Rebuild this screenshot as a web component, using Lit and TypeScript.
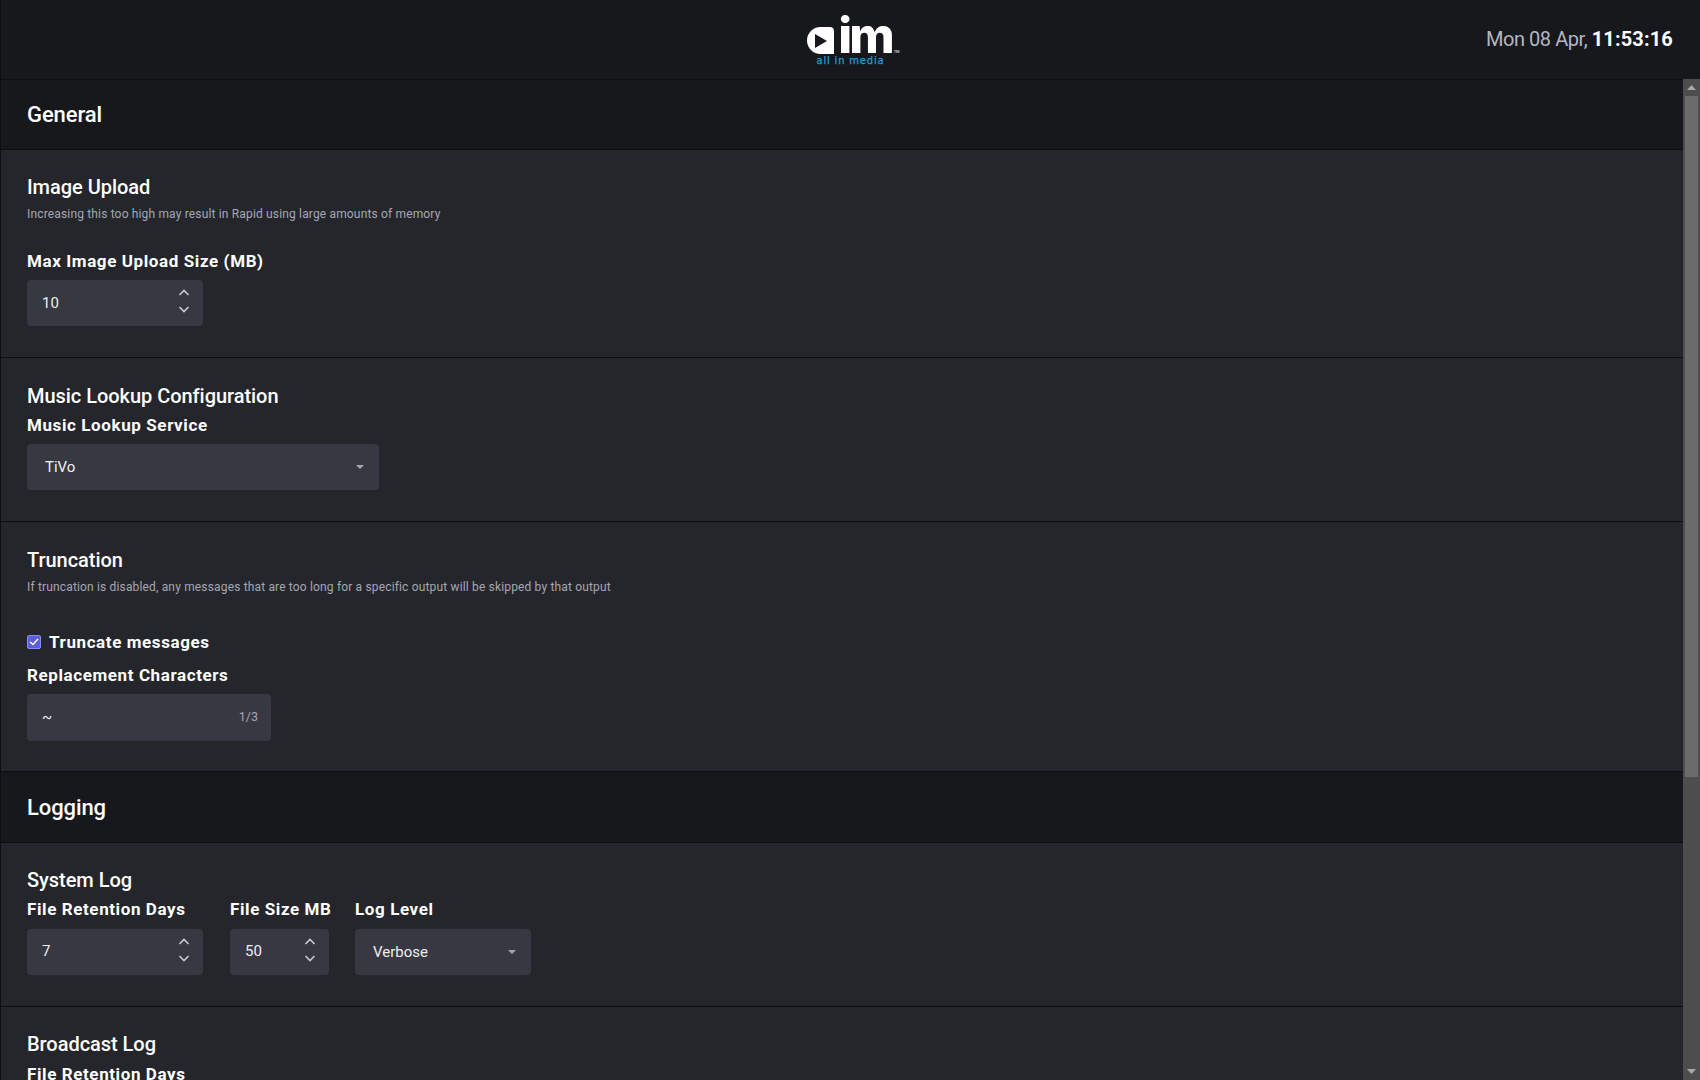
import { LitElement, html, css, svg } from 'lit';
import { customElement } from 'lit/decorators.js';

const chevrons = html`
  <svg class="spin" width="14" height="26" viewBox="0 0 14 26" fill="none" stroke="#c9cad0" stroke-width="1.6">
    <path d="M2.5 7 L7 2.5 L11.5 7" />
    <path d="M2.5 19 L7 23.5 L11.5 19" />
  </svg>
`;

const caret = svg`<path d="M0 0 H8 L4 4 Z" fill="#a6a7af" />`;

@customElement('app-root')
export class AppRoot extends LitElement {
  static styles = css`
    :host {
      display: flex;
      flex-direction: column;
      width: 1700px;
      height: 1080px;
      overflow: hidden;
      background: #25262b;
      color: #fff;
      font-family: Roboto, 'Liberation Sans', sans-serif;
    }
    .top {
      flex: none;
      height: 80px;
      box-sizing: border-box;
      display: grid;
      grid-template-columns: 1fr auto 1fr;
      align-items: center;
      background: #17181c;
      border-bottom: 1px solid #0d0e10;
      border-left: 1px solid #0d0e10;
    }
    .logo {
      grid-column: 2;
      display: flex;
      flex-direction: column;
      align-items: center;
      padding-top: 2px;
    }
    .logoMark {
      display: flex;
      align-items: flex-end;
      height: 42px;
    }
    .logoA {
      display: block;
      margin-right: 4px;
      margin-bottom: 3px;
    }
    .logoIm {
      font-family: Inter, Roboto, sans-serif;
      font-weight: 800;
      font-size: 49px;
      line-height: 42px;
      letter-spacing: -3px;
    }
    .tm {
      width: 6px;
      margin-right: -6px;
      font-size: 4px;
      line-height: 6px;
      margin-left: 2px;
      margin-bottom: 2px;
    }
    .logoSub {
      font-family: 'DejaVu Sans', sans-serif;
      font-size: 10px;
      line-height: 10px;
      letter-spacing: 0.8px;
      color: #1c9fd8;
      -webkit-text-stroke: 0.25px #1c9fd8;
      margin-top: -1px;
    }
    .clock {
      grid-column: 3;
      justify-self: end;
      margin-right: 27px;
      margin-bottom: 2px;
      font-size: 20px;
      color: #b4b6c2;
      letter-spacing: -0.45px;
    }
    .clock b {
      color: #fff;
      font-weight: 700;
      letter-spacing: 0.15px;
    }
    .body {
      flex: 1;
      min-height: 0;
      display: flex;
    }
    .scroller {
      flex: 1;
      min-width: 0;
      overflow: hidden;
      border-left: 1px solid #0d0e10;
    }
    .bar {
      flex: none;
      width: 17px;
      margin-top: -1px;
      display: flex;
      flex-direction: column;
      align-items: center;
      background: #4d4d4d;
    }
    .barBtn {
      flex: none;
      height: 17px;
      display: flex;
      align-items: center;
      justify-content: center;
    }
    .thumb {
      flex: none;
      width: 13px;
      height: 681px;
      background: #6b6b6b;
    }
    .track {
      flex: 1;
    }
    .band {
      height: 70px;
      box-sizing: border-box;
      display: flex;
      align-items: center;
      padding-left: 26px;
      background: #17181c;
      border-bottom: 1px solid #0d0e10;
      font-size: 22px;
      font-weight: 500;
      letter-spacing: -0.1px;
    }
    .band.tall {
      height: 71px;
    }
    .panel {
      box-sizing: border-box;
      padding: 24px 26px 30px;
      border-bottom: 1px solid #0d0e10;
    }
    .panel.tight {
      padding-top: 23px;
    }
    .panel.last {
      border-bottom: 0;
    }
    h3 {
      margin: 0 0 3px;
      font-size: 20px;
      line-height: 28px;
      font-weight: 500;
      letter-spacing: -0.04px;
    }
    .hint {
      margin: 4px 0 0;
      font-size: 12px;
      line-height: 18px;
      letter-spacing: 0.16px;
      color: #a6a7b4;
    }
    h3:has(+ .hint) {
      margin-bottom: 0;
    }
    label {
      display: block;
      font-size: 17px;
      line-height: 24px;
      font-weight: 700;
      letter-spacing: 0.6px;
      white-space: nowrap;
    }
    .field {
      height: 46px;
      margin-top: 7px;
      box-sizing: border-box;
      display: flex;
      align-items: center;
      justify-content: space-between;
      background: #373842;
      border-radius: 4px;
      font-size: 15px;
      color: #eeeef0;
    }
    .num {
      padding: 0 12px 0 15px;
    }
    .num > span:first-child {
      margin-bottom: 1px;
    }
    .num .spin {
      margin-bottom: 4px;
    }
    .sel {
      padding: 0 15px 0 18px;
    }
    .logRow {
      display: grid;
      grid-template-columns: 177px 99px 176px;
      column-gap: 26px;
    }
    .logRow .field {
      margin-top: 8px;
    }
    .logRow .num > span:first-child {
      margin-bottom: 2px;
    }
    .check {
      display: flex;
      align-items: center;
      gap: 8px;
    }
    .box {
      width: 14px;
      height: 14px;
      box-sizing: border-box;
      border: 1px solid #8a8cf0;
      border-radius: 2px;
      background: #5d5fd6;
      display: flex;
      align-items: center;
      justify-content: center;
    }
    .count {
      font-size: 12.5px;
      color: #a6a7b4;
      margin-bottom: 2px;
    }
    .wCount {
      height: 47px;
      padding-right: 13px;
    }
  `;

  private logoA() {
    return html`<svg class="logoA" width="27" height="27" viewBox="0 0 27 27">
      <path
        fill="#fff"
        fill-rule="evenodd"
        d="M13.5 0 H23 C25.5 0 27 1.5 27 4 V27 H13.5 C6 27 0 21 0 13.5 C0 6 6 0 13.5 0 Z M8 7 V21 L20 14 Z"
      />
    </svg>`;
  }

  private numField(value: string, width: string) {
    return html`<div class="field num" style="width:${width}"><span>${value}</span>${chevrons}</div>`;
  }

  private selectField(value: string, width: string) {
    return html`<div class="field sel" style="width:${width}">
      <span>${value}</span>
      <svg width="8" height="4" viewBox="0 0 8 4">${caret}</svg>
    </div>`;
  }

  render() {
    return html`
      <header class="top">
        <div class="logo">
          <div class="logoMark">
            ${this.logoA()}<span class="logoIm">im</span><span class="tm">TM</span>
          </div>
          <div class="logoSub">all in media</div>
        </div>
        <div class="clock">Mon 08 Apr, <b>11:53:16</b></div>
      </header>
      <div class="body">
        <main class="scroller">
          <div class="band">General</div>
          <section class="panel tight" style="height:208px">
            <h3>Image Upload</h3>
            <p class="hint">Increasing this too high may result in Rapid using large amounts of memory</p>
            <label style="margin-top:26px">Max Image Upload Size (MB)</label>
            ${this.numField('10', '176px')}
          </section>
          <section class="panel" style="height:164px">
            <h3>Music Lookup Configuration</h3>
            <label>Music Lookup Service</label>
            ${this.selectField('TiVo', '352px')}
          </section>
          <section class="panel" style="height:250px">
            <h3>Truncation</h3>
            <p class="hint">If truncation is disabled, any messages that are too long for a specific output will be skipped by that output</p>
            <div class="check" style="margin-top:34px">
              <div class="box">
                <svg width="10" height="8" viewBox="0 0 10 8" fill="none" stroke="#fff" stroke-width="1.4"><path d="M1 4 L4 6.5 L9 1" /></svg>
              </div>
              <label>Truncate messages</label>
            </div>
            <label style="margin-top:9px">Replacement Characters</label>
            <div class="field num wCount" style="width:244px">
              <span>~</span><span class="count">1/3</span>
            </div>
          </section>
          <div class="band tall">Logging</div>
          <section class="panel tight" style="height:164px">
            <h3>System Log</h3>
            <div class="logRow">
              <div>
                <label>File Retention Days</label>
                ${this.numField('7', '176px')}
              </div>
              <div>
                <label>File Size MB</label>
                ${this.numField('50', '100%')}
              </div>
              <div>
                <label>Log Level</label>
                ${this.selectField('Verbose', '100%')}
              </div>
            </div>
          </section>
          <section class="panel tight last">
            <h3 style="margin-bottom:4px">Broadcast Log</h3>
            <label>File Retention Days</label>
            ${this.numField('7', '176px')}
          </section>
        </main>
        <aside class="bar">
          <div class="barBtn"><svg width="9" height="5" viewBox="0 0 9 5"><path d="M4.5 0 L9 5 H0 Z" fill="#a8a8a8" /></svg></div>
          <div class="thumb"></div>
          <div class="track"></div>
          <div class="barBtn"><svg width="9" height="5" viewBox="0 0 9 5"><path d="M0 0 H9 L4.5 5 Z" fill="#a8a8a8" /></svg></div>
        </aside>
      </div>
    `;
  }
}
